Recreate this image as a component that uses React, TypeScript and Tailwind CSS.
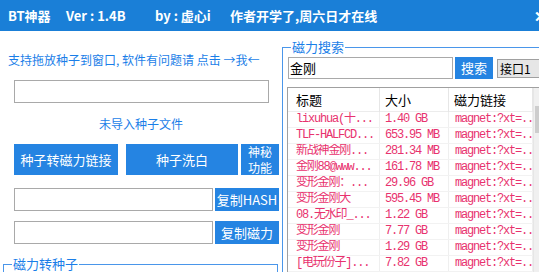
import React from 'react';

const results = [
  ['lixuhua(十...', '1.40 GB'],
  ['TLF-HALFCD...', '653.95 MB'],
  ['新战神金刚...', '281.34 MB'],
  ['金刚88@www...', '161.78 MB'],
  ['变形金刚：...', '29.96 GB'],
  ['变形金刚大', '595.45 MB'],
  ['08.无水印_...', '1.22 GB'],
  ['变形金刚', '7.77 GB'],
  ['变形金刚', '1.29 GB'],
  ['[电玩份子]...', '7.82 GB'],
];

const App = () => {
  return (
    <div className="w-[539px] h-[272px] overflow-hidden bg-white font-['Noto_Sans_CJK_SC',sans-serif]">
      {/* title bar */}
      <div className="h-[31px] bg-[#1a7fd7] flex items-center pl-2 text-white font-bold text-[13px] leading-[16px] whitespace-nowrap">
        <span className="w-[58px] shrink-0">BT神器</span>
        <span className="w-[89px] shrink-0">Ver : 1.4B</span>
        <span className="w-[75px] shrink-0">by : 虚心i</span>
        <span className="shrink-0">作者开学了,周六日才在线</span>
        <span className="ml-auto mr-[-8px] text-[15px]">✕</span>
      </div>

      <div className="flex">
        {/* left: torrent file */}
        <div className="w-[282px] shrink-0 pt-[21px] flex flex-col">
          <p className="pl-2 text-[12px] leading-[16px] text-[#1a7ee8] whitespace-nowrap">
            支持拖放种子到窗口, 软件有问题请 点击 →我←
          </p>
          <div className="ml-[14px] mt-[12px] w-[255px] h-[23px] border border-[#a9a9a9]" />
          <p className="mt-[13px] text-center text-[12px] leading-[16px] text-[#1a7ee8]">未导入种子文件</p>
          <div className="mt-[12px] ml-[14px] flex h-[31px] text-white text-[13px]">
            <button className="w-[104px] bg-[#2584e2]">种子转磁力链接</button>
            <button className="ml-[8px] w-[112px] bg-[#2584e2]">种子洗白</button>
            <button className="ml-[3px] w-[38px] bg-[#2584e2] text-[12px] leading-[16px] flex flex-col items-center justify-center">
              <span>神秘</span>
              <span>功能</span>
            </button>
          </div>
          <div className="mt-[13px] ml-[14px] flex h-[23px]">
            <div className="w-[199px] border border-[#a9a9a9]" />
            <button className="ml-[2px] w-[64px] bg-[#2584e2] text-white text-[13px]">复制HASH</button>
          </div>
          <div className="mt-[10px] ml-[14px] flex h-[23px]">
            <div className="w-[199px] border border-[#a9a9a9]" />
            <button className="ml-[2px] w-[64px] bg-[#2584e2] text-white text-[13px]">复制磁力</button>
          </div>
          <fieldset className="mt-[13px] ml-[3px] w-[275px] h-[40px] border border-[#4a96ea]">
            <legend className="ml-[8px] px-[1px] text-[13px] leading-[14px] text-[#1a7ee8]">磁力转种子</legend>
            <div className="flex justify-end pr-[9px] pt-[2px]">
              <span className="w-[38px] h-[20px] bg-[#2584e2] text-white text-[12px] text-center">磁力</span>
            </div>
          </fieldset>
        </div>

        {/* right: magnet search */}
        <div className="w-[270px] shrink-0">
          <fieldset className="mt-[9px] h-[260px] border border-[#4a96ea]">
            <legend className="ml-[8px] px-[1px] text-[13px] leading-[14px] text-[#1a7ee8]">磁力搜索</legend>
            <div className="pl-[4px]">
              <div className="mt-[3px] flex items-center h-[22px]">
                <div className="ml-[1px] w-[165px] h-[22px] border border-[#a9a9a9] pl-[1px] text-[13px] leading-[20px] text-black">
                  金刚
                </div>
                <button className="ml-[2px] w-[38px] h-[22px] bg-[#2584e2] text-white text-[13px]">搜索</button>
                <div className="ml-[4px] w-[50px] h-[19px] bg-[#e6e6e6] border border-[#a0a0a0] pl-[2px] text-[12px] leading-[17px] text-black">
                  接口1
                </div>
              </div>

              <div className="mt-[8px] flex border-l border-t border-[#a0a0a0] h-[200px]">
                <div className="w-[245px] shrink-0">
                  <div className="flex h-[24px] items-center border-b border-[#ececec] text-[13px] text-black leading-[24px]">
                    <div className="w-[92px] pl-[8px] border-r border-[#e6e6e6]">标题</div>
                    <div className="w-[69px] pl-[5px] border-r border-[#e6e6e6]">大小</div>
                    <div className="w-[84px] pl-[5px] border-r border-[#e6e6e6]">磁力链接</div>
                  </div>
                  {results.map(([title, size], i) => (
                    <div
                      key={i}
                      className="flex h-[16px] border-b border-[#f2f2f2] text-[12px] leading-[15px] tracking-[-1.2px] text-[#e8326e] whitespace-nowrap font-['Liberation_Mono','Noto_Sans_CJK_SC',monospace]"
                    >
                      <div className="w-[92px] pl-[8px] border-r border-[#efefef] overflow-hidden">{title}</div>
                      <div className="w-[69px] pl-[5px] border-r border-[#efefef] overflow-hidden">{size}</div>
                      <div className="w-[84px] pl-[6px] border-r border-[#efefef] overflow-hidden">magnet:?xt=...</div>
                    </div>
                  ))}
                </div>
                <div className="w-[17px] shrink-0 bg-[#f0f0f0] border-l border-[#e6e6e6] flex flex-col">
                  <div className="h-[17px]" />
                  <div className="mt-[1px] mx-[1px] h-[27px] bg-[#cdcdcd]" />
                </div>
              </div>
            </div>
          </fieldset>
        </div>
      </div>
    </div>
  );
};

export default App;
